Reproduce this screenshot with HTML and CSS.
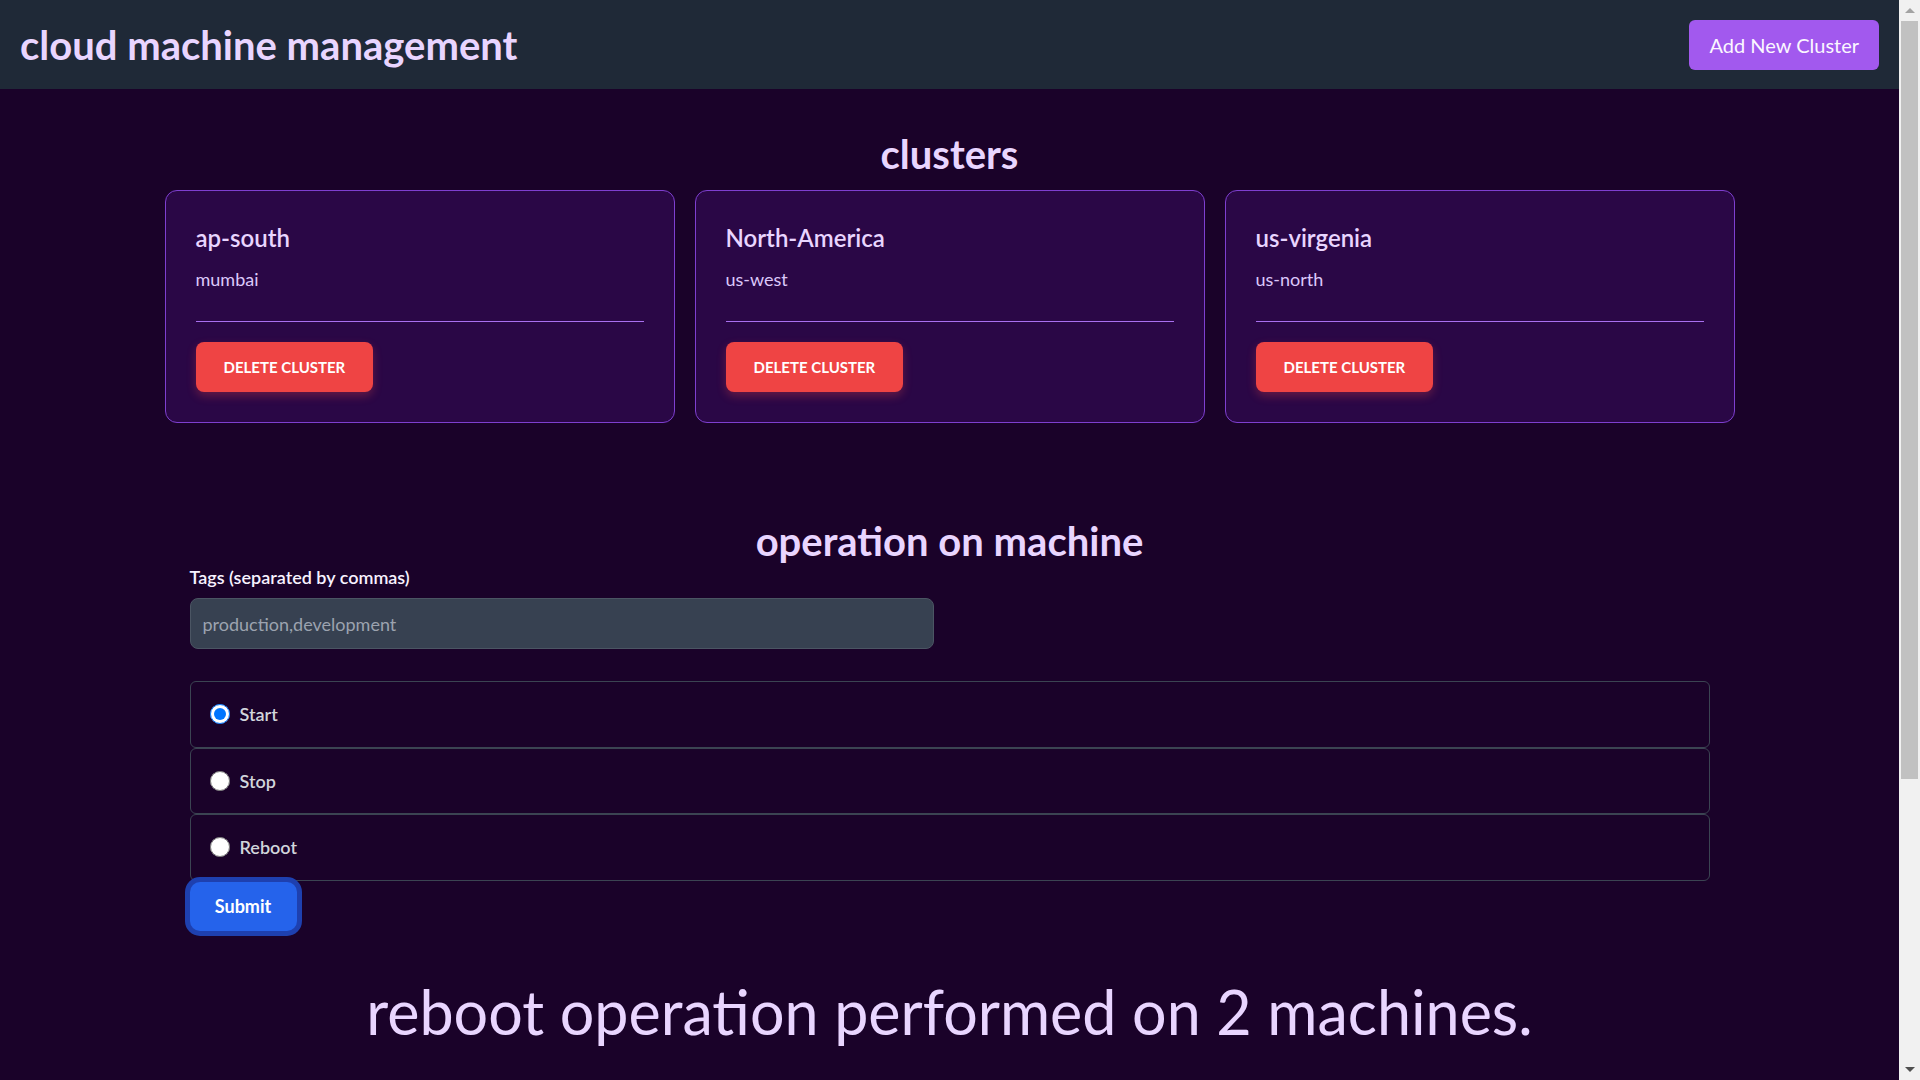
FILE: index.html
```html
<!DOCTYPE html>
<html lang="en">
<head>
<meta charset="utf-8">
<title>cloud machine management</title>
<link rel="stylesheet" href="styles.css">
</head>
<body>
<div class="page">
  <header class="topbar">
    <h1 class="brand">cloud machine management</h1>
    <button class="btn-add" type="button">Add New Cluster</button>
  </header>
  <main class="main">
    <section class="clusters">
      <h2 class="section-title">clusters</h2>
      <div class="cluster-grid">
        <div class="card">
          <h3 class="card-name">ap-south</h3>
          <p class="card-region">mumbai</p>
          <hr class="card-divider">
          <button class="btn-delete" type="button">Delete Cluster</button>
        </div>
        <div class="card">
          <h3 class="card-name">North-America</h3>
          <p class="card-region">us-west</p>
          <hr class="card-divider">
          <button class="btn-delete" type="button">Delete Cluster</button>
        </div>
        <div class="card">
          <h3 class="card-name">us-virgenia</h3>
          <p class="card-region">us-north</p>
          <hr class="card-divider">
          <button class="btn-delete" type="button">Delete Cluster</button>
        </div>
      </div>
    </section>
    <section class="operation">
      <h2 class="section-title">operation on machine</h2>
      <form class="op-form">
        <label class="field-label" for="tags">Tags (separated by commas)</label>
        <input class="field-input" id="tags" type="text" placeholder="production,development">
        <div class="radio-list">
          <label class="radio-row"><input type="radio" name="op" checked><span>Start</span></label>
          <label class="radio-row"><input type="radio" name="op"><span>Stop</span></label>
          <label class="radio-row"><input type="radio" name="op"><span>Reboot</span></label>
        </div>
        <button class="btn-submit" type="button">Submit</button>
      </form>
    </section>
    <p class="result">reboot operation performed on 2 machines.</p>
  </main>
</div>
<aside class="scrollbar" aria-hidden="true">
  <div class="sb-btn"><span class="sb-arrow-up"></span></div>
  <div class="sb-thumb"></div>
  <div class="sb-space"></div>
  <div class="sb-btn"><span class="sb-arrow-down"></span></div>
</aside>
</body>
</html>
```
FILE: styles.css
```css
* { box-sizing: border-box; }

html { background: #1a0229; }

body {
  margin: 0;
  display: flex;
  align-items: flex-start;
  background: #1a0229;
  color: #e9d5ff;
  font-family: Lato, "Noto Sans", sans-serif;
}

.page {
  flex: 1;
  min-width: 0;
  min-height: 1479px;
}

/* imitation of the browser's vertical scrollbar */
.scrollbar {
  position: sticky;
  top: 0;
  flex: none;
  width: 21px;
  height: 100vh;
  background: #f1f1f1;
  display: flex;
  flex-direction: column;
}

.sb-btn {
  height: 21px;
  display: flex;
  align-items: center;
  justify-content: center;
}

.sb-arrow-up {
  width: 0;
  height: 0;
  border-left: 5px solid transparent;
  border-right: 5px solid transparent;
  border-bottom: 5px solid #a3a3a3;
}

.sb-arrow-down {
  width: 0;
  height: 0;
  border-left: 5px solid transparent;
  border-right: 5px solid transparent;
  border-top: 5px solid #505050;
}

.sb-thumb {
  height: 758px;
  margin: 0 2px;
  background: #c1c1c1;
}

.sb-space { flex: 1; }

.topbar {
  height: 89px;
  background: #1f2937;
  display: flex;
  align-items: center;
  justify-content: space-between;
  padding: 0 20px;
}

.brand {
  margin: 0;
  font-size: 40px;
  line-height: 44px;
  font-weight: 700;
  color: #e9d5ff;
}

.btn-add {
  background: #a259ee;
  color: #fbf7ff;
  border: 0;
  border-radius: 6px;
  font-family: inherit;
  font-size: 20px;
  line-height: 28px;
  padding: 11px 20px;
}

.main { padding-top: 45px; }

.section-title {
  margin: 0;
  text-align: center;
  font-size: 40px;
  line-height: 40px;
  font-weight: 700;
  color: #e9d5ff;
}

.cluster-grid {
  width: 1570px;
  margin: 16px auto 0;
  display: grid;
  grid-template-columns: repeat(3, 1fr);
  gap: 20px;
}

.card {
  background: #2a0746;
  border: 1px solid #7e3fd0;
  border-radius: 12px;
  padding: 31px 30px 30px;
}

.card-name {
  margin: 0;
  font-size: 24px;
  line-height: 32px;
  font-weight: 600;
  color: #e9d5ff;
}

.card-region {
  margin: 11px 0 0;
  font-size: 18px;
  line-height: 28px;
  color: #dcc8fa;
}

.card-divider {
  border: 0;
  border-top: 1px solid #a970f0;
  margin: 28px 0 20px;
}

.btn-delete {
  display: block;
  height: 50px;
  padding: 0 28px;
  background: #ef4444;
  color: #fff;
  border: 0;
  border-radius: 8px;
  font-family: inherit;
  font-size: 15px;
  font-weight: 700;
  text-transform: uppercase;
  box-shadow: 0 4px 10px rgba(239, 68, 68, 0.3);
}

.operation .section-title { margin-top: 98px; }

.op-form {
  width: 1520px;
  margin: 4px auto 0;
}

.field-label {
  display: block;
  font-size: 18px;
  line-height: 24px;
  font-weight: 600;
  color: #f8f2ff;
  margin-bottom: 9px;
}

.field-input {
  display: block;
  width: 744px;
  height: 51px;
  background: #374151;
  border: 1px solid #4b5563;
  border-radius: 8px;
  padding: 0 12px;
  font-family: inherit;
  font-size: 18px;
  color: #e5e7eb;
  outline: none;
}

.field-input::placeholder { color: #9ca3af; }

.radio-list { margin-top: 32px; }

.radio-row {
  display: flex;
  align-items: center;
  gap: 10px;
  height: 66.5px;
  padding-left: 19px;
  border: 1px solid #3b4452;
  border-radius: 6px;
  font-size: 18px;
  font-weight: 600;
  color: #d1d5db;
}

.radio-row input {
  width: 20px;
  height: 20px;
  margin: 0;
}

.btn-submit {
  display: block;
  margin-top: 1px;
  width: 107px;
  height: 49px;
  background: #2563eb;
  color: #fff;
  border: 0;
  border-radius: 10px;
  box-shadow: 0 0 0 5px #1e40af;
  font-family: inherit;
  font-size: 18px;
  font-weight: 700;
}

.result {
  margin: 50px 0 0;
  text-align: center;
  font-size: 61px;
  line-height: 1;
  color: #e9d5ff;
}
```
